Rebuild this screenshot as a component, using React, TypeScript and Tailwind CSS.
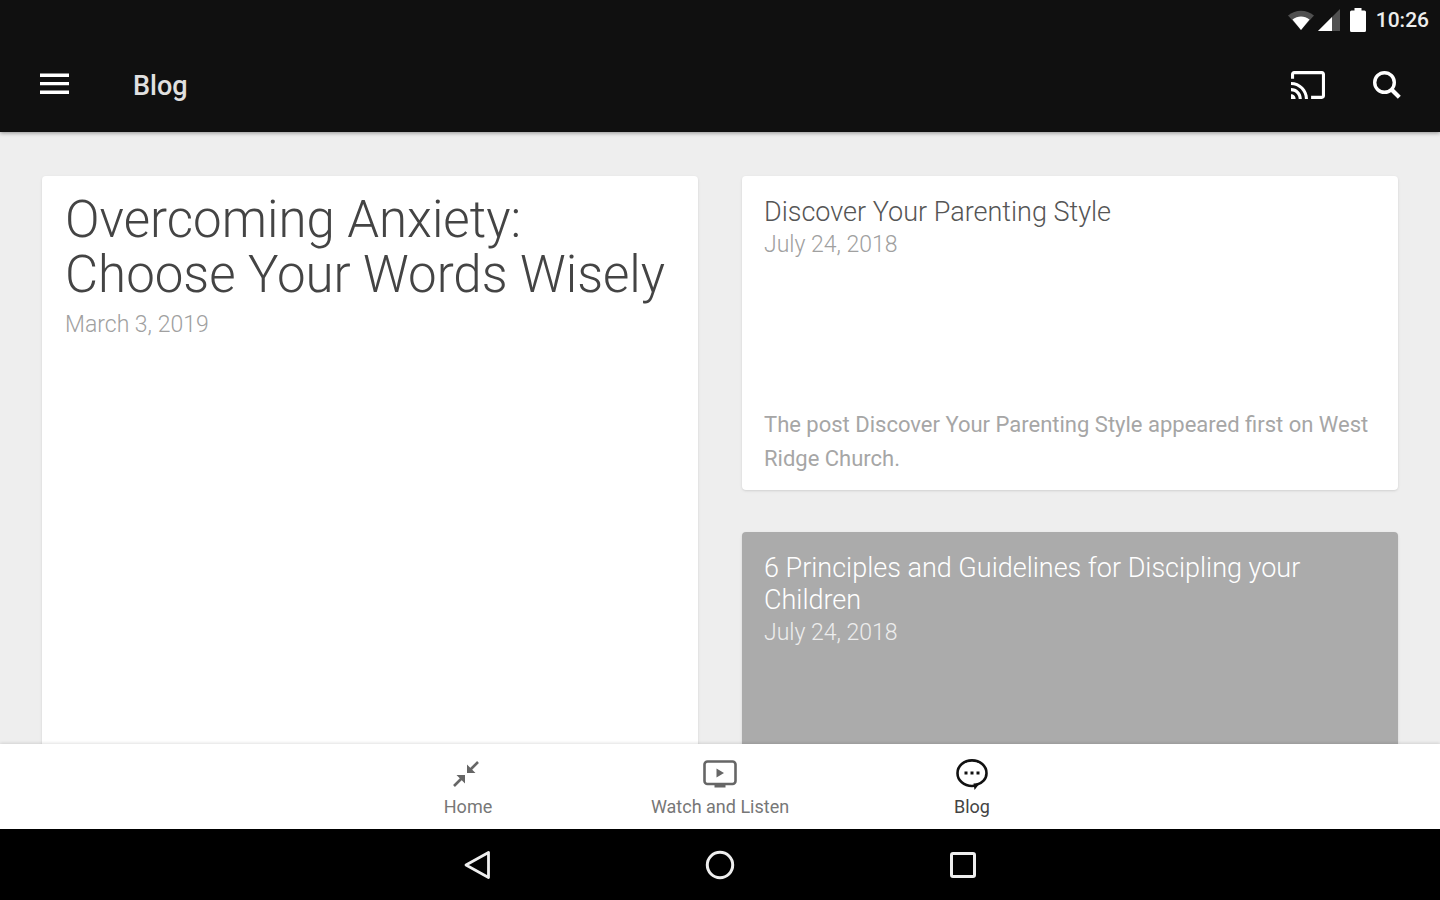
import type { ReactNode } from 'react';

type Post = { title: string; date: string; excerpt?: string };

const featured: Post = {
  title: 'Overcoming Anxiety: Choose Your Words Wisely',
  date: 'March 3, 2019',
};

const parenting: Post = {
  title: 'Discover Your Parenting Style',
  date: 'July 24, 2018',
  excerpt: 'The post Discover Your Parenting Style appeared first on West Ridge Church.',
};

const principles: Post = {
  title: '6 Principles and Guidelines for Discipling your Children',
  date: 'July 24, 2018',
};

function StatusBar() {
  return (
    <div className="flex h-10 items-center justify-end pr-[11px] text-[#eee]">
      <svg viewBox="0 0 26 20" className="mr-1 h-5 w-[26px]" aria-hidden="true">
        <path d="M0 5.5C7.500-.8 18.500-.8 26 5.500L13 20Z" fill="#505050" />
        <path d="M4.500 9.500C9.500 5.500 16.500 5.500 21.500 9.500L13 20Z" fill="#fff" />
      </svg>
      <svg viewBox="0 0 22 22" className="mr-2.5 h-[22px] w-[22px]" aria-hidden="true">
        <path d="M22 0V22H0Z" fill="#505050" />
        <path d="M14 8V22H0Z" fill="#fff" />
      </svg>
      <svg viewBox="0 0 16 24" className="mr-2.5 h-6 w-4" aria-hidden="true">
        <path d="M4.500 0H11.500V2.500H14.500Q16 2.500 16 4V22.500Q16 24 14.500 24H1.500Q0 24 0 22.500V4Q0 2.500 1.500 2.500H4.500Z" fill="#fff" />
      </svg>
      <time className="text-[21px] leading-6 font-medium">10:26</time>
    </div>
  );
}

function Toolbar() {
  return (
    <div className="flex h-[92px] items-center pr-[35px] pl-9 text-white">
      <button type="button" aria-label="Open menu" className="p-1">
        <svg viewBox="0 0 29 22" className="mb-1 h-[22px] w-[29px]" fill="currentColor" aria-hidden="true">
          <path d="M0 .5H29V4H0ZM0 9H29V12.300H0ZM0 17.500H29V21H0Z" />
        </svg>
      </button>
      <h1 className="ml-[60px] flex-1 text-[27px] leading-8 font-medium text-[#e0e0e0]">Blog</h1>
      <button type="button" aria-label="Cast" className="mb-0.5 p-1">
        <svg viewBox="1 3 22 18" className="h-7 w-[34px]" fill="currentColor" aria-hidden="true">
          <path d="M21 3H3c-1.100 0-2 .9-2 2v3h2V5h18v14h-7v2h7c1.100 0 2-.9 2-2V5c0-1.100-.9-2-2-2zM1 18v3h3c0-1.660-1.340-3-3-3zm0-4v2c2.760 0 5 2.240 5 5h2c0-3.870-3.130-7-7-7zm0-4v2c4.970 0 9 4.030 9 9h2c0-6.080-4.930-11-11-11z" />
        </svg>
      </button>
      <button type="button" aria-label="Search" className="mb-0.5 ml-10 p-1">
        <svg viewBox="0 0 28 28" className="h-7 w-7" fill="none" stroke="currentColor" aria-hidden="true">
          <circle cx="11.500" cy="11.500" r="9.800" strokeWidth="3.400" />
          <path d="M18.500 18.500L26.300 26.300" strokeWidth="4.200" />
        </svg>
      </button>
    </div>
  );
}

function SmallCard({ post, dark = false }: { post: Post; dark?: boolean }) {
  return (
    <article
      className={
        dark
          ? 'flex h-[314px] flex-col rounded bg-[#ababab] px-[22px] pt-5 pb-3.5 text-white shadow-sm'
          : 'flex h-[314px] flex-col rounded bg-white px-[22px] pt-5 pb-3.5 text-[#555] shadow-sm'
      }
    >
      <h2 className="text-[27px] leading-8 font-light">{post.title}</h2>
      <p className={dark ? 'text-[23px] leading-[34px] font-light text-[#ededed]' : 'text-[23px] leading-[34px] font-light text-[#a0a0a0]'}>
        {post.date}
      </p>
      {post.excerpt && <p className="mt-auto text-[22px] leading-[34px] text-[#a6a6a6]">{post.excerpt}</p>}
    </article>
  );
}

function Tab({ label, active = false, children }: { label: string; active?: boolean; children: ReactNode }) {
  return (
    <a
      href="#"
      aria-current={active ? 'page' : undefined}
      className={
        active
          ? 'flex w-[252px] flex-col items-center pt-3.5 text-[#111]'
          : 'flex w-[252px] flex-col items-center pt-3.5 text-[#666]'
      }
    >
      <span className="flex h-8 items-center">{children}</span>
      <span className={active ? 'mt-[5px] text-[18px] leading-6 text-[#444]' : 'mt-[5px] text-[18px] leading-6 text-[#777]'}>{label}</span>
    </a>
  );
}

function TabBar() {
  return (
    <nav aria-label="Sections" className="relative flex h-[85px] shrink-0 justify-center bg-white shadow-[0_-1px_3px_rgba(0,0,0,0.12)]">
      <Tab label="Home">
        <svg viewBox="0 0 26 26" className="mr-1 h-[26px] w-[26px]" fill="none" stroke="currentColor" strokeWidth="2.600" aria-hidden="true">
          <path d="M25 1L17 9M1 25L9 17" />
          <path d="M14 3.500V12H22.500ZM3.500 14H12V22.500Z" fill="currentColor" stroke="none" />
        </svg>
      </Tab>
      <Tab label="Watch and Listen">
        <svg viewBox="0 0 34 28" className="h-7 w-[34px]" fill="none" stroke="currentColor" aria-hidden="true">
          <rect x="1.500" y="1.500" width="31" height="22.500" rx="3" strokeWidth="2.600" />
          <path d="M11.500 24H22.500V27.500H11.500ZM13.500 8.500L21 13L13.500 17.500Z" fill="currentColor" stroke="none" />
        </svg>
      </Tab>
      <Tab label="Blog" active>
        <svg viewBox="0 0 32 32" className="h-8 w-8" fill="none" stroke="currentColor" aria-hidden="true">
          <path d="M20.500 26.800C26 25.500 30.500 21 30.500 15.200C30.500 8 24 2.400 16 2.400S1.500 8 1.500 15.200S8 28 16 28L18.500 27.800" strokeWidth="2.600" />
          <path d="M17.500 25.500L24 25L18.500 32Z" fill="currentColor" stroke="none" />
          <path d="M8.500 13.500h3v3h-3zM14.500 13.500h3v3h-3zM20.500 13.500h3v3h-3z" fill="currentColor" stroke="none" />
        </svg>
      </Tab>
    </nav>
  );
}

function SystemBar() {
  return (
    <div className="relative flex h-[71px] shrink-0 justify-center bg-black text-[#eee]">
      <button type="button" aria-label="Back" className="flex w-[243px] items-center justify-center">
        <svg viewBox="0 0 28 30" className="h-[30px] w-7" fill="none" stroke="currentColor" strokeWidth="2.800" strokeLinejoin="round" aria-hidden="true">
          <path d="M25.500 2.500V27.500L3 15Z" />
        </svg>
      </button>
      <button type="button" aria-label="Home screen" className="flex w-[243px] items-center justify-center">
        <svg viewBox="0 0 30 30" className="h-[30px] w-[30px]" fill="none" stroke="currentColor" strokeWidth="3" aria-hidden="true">
          <circle cx="15" cy="15" r="12.700" />
        </svg>
      </button>
      <button type="button" aria-label="Recent apps" className="flex w-[243px] items-center justify-center">
        <svg viewBox="0 0 28 28" className="h-7 w-7" fill="none" stroke="currentColor" strokeWidth="3" aria-hidden="true">
          <rect x="2.500" y="2.500" width="23" height="23" rx="1.500" />
        </svg>
      </button>
    </div>
  );
}

export default function App() {
  return (
    <div className="flex h-screen flex-col bg-[#eee] font-['Roboto',sans-serif]">
      <header className="relative shrink-0 bg-[#101010] shadow-[0_1px_4px_rgba(0,0,0,0.4)]">
        <StatusBar />
        <Toolbar />
      </header>
      <main className="grid min-h-0 flex-1 grid-cols-2 gap-11 overflow-hidden px-[42px] pt-11">
        <article className="h-[672px] rounded bg-white px-[23px] pt-4 shadow-sm">
          <h2 className="text-[51px] leading-[55px] font-light text-[#444]">{featured.title}</h2>
          <p className="mt-1.5 text-[23px] leading-[34px] font-light text-[#a0a0a0]">{featured.date}</p>
        </article>
        <div className="flex flex-col gap-[42px]">
          <SmallCard post={parenting} />
          <SmallCard post={principles} dark />
        </div>
      </main>
      <TabBar />
      <SystemBar />
    </div>
  );
}
